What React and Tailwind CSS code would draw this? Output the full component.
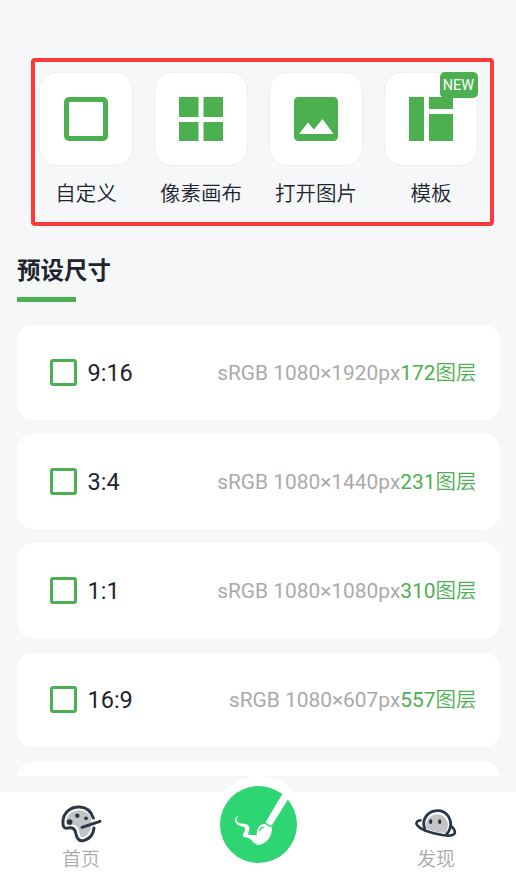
import React from 'react';
import clsx from 'clsx';

const FrameIcon = () => (
    <svg width="44" height="44" viewBox="0 0 44 44" fill="none">
        <rect x="2.5" y="2.5" width="39" height="39" rx="2.5" stroke="#4caf50" strokeWidth="5" />
    </svg>
);

const GridIcon = () => (
    <svg width="44" height="44" viewBox="0 0 44 44" fill="#4caf50">
        <path d="M0 0h19.5v20H0zM24.5 0H44v20H24.5zM0 25h19.5v19H0zM24.5 25H44v19H24.5z" />
    </svg>
);

const ImageIcon = () => (
    <svg width="44" height="44" viewBox="0 0 44 44">
        <rect width="44" height="44" rx="4.5" fill="#4caf50" />
        <path d="M5 37L14 25.5L20 32.5L28.5 22L39.5 37Z" fill="#fff" />
    </svg>
);

const TemplateIcon = () => (
    <svg width="44" height="44" viewBox="0 0 44 44" fill="#4caf50">
        <path d="M0 0h15v44H0zM20 0h24v12H20zM20 17h24v27H20z" />
    </svg>
);

const PaletteIcon = () => (
    <svg width="42" height="38" viewBox="61 45 126 114" fill="none" strokeLinecap="round" strokeLinejoin="round">
        <path d="M79 92C82 74 99 62 119 61C137 61 150 71 154 86L155 108C152 127 141 141 128 142C117 140 120 113 107 106C98 101 86 107 80 103Z" fill="#c4c4c4" />
        <path d="M161 84C154 62 140 52 120 51C91 50 70 70 70 94C69 111 74 116 84 114C100 110 107 118 109 132C113 151 122 155 134 151C151 146 161 132 163 114" stroke="#2c3549" strokeWidth="9" />
        <path d="M127 112L181 94" stroke="#2c3549" strokeWidth="9" />
        <circle cx="90" cy="96" r="8.5" fill="#2c3549" />
        <circle cx="113" cy="77" r="6.5" fill="#2c3549" />
        <circle cx="139" cy="85" r="5.5" fill="#2c3549" />
    </svg>
);

const PlanetIcon = () => (
    <svg width="44" height="34" viewBox="41 53 132 102" fill="none" strokeLinecap="round">
        <path d="M78 117C73 94 89 76 111 75C133 76 146 94 142 115L136 130C116 132 96 126 78 117Z" fill="#c4c4c4" />
        <path d="M73 118C63 91 82 65 109 64C139 62 157 91 149 117C147 124 143 130 139 134" stroke="#2c3549" strokeWidth="8.5" />
        <path d="M60 93C49 94 45 101 51 108C60 121 96 132 126 137C145 140 160 140 163 132C165 125 161 118 153 111" stroke="#2c3549" strokeWidth="8" />
        <ellipse cx="91" cy="97" rx="5" ry="7" fill="#2c3549" />
        <ellipse cx="118" cy="97" rx="5" ry="7" fill="#2c3549" />
    </svg>
);

const BrushLogo = () => (
    <svg width="77" height="77" viewBox="60.5 92.5 231 231">
        <circle cx="176" cy="208" r="115.5" fill="#2ed573" />
        <path d="M248 116L266 130L216 211C210 210 203 207 197 201Z" fill="#fff" />
        <path d="M195 206C202 212 209 215 216 217C218 241 203 268 171 270C165 255 170 244 171 232C173 215 182 207 195 206Z" fill="#fff" />
        <path d="M177 230C177 220 184 214 195 216C186 219 183 224 177 230Z" fill="#2ed573" />
        <path d="M117 181C107 185 103 193 107 201C111 210 121 211 130 215C140 219 135 225 130 237C128 242 129 246 136 246C146 247 154 251 161 262C166 268 170 267 170 257L169 241C163 239 156 240 149 239C142 239 145 235 148 227C151 215 147 208 133 206C119 205 111 201 110 195C109 190 113 185 117 181Z" fill="#fff" />
    </svg>
);

const actions = [
    { label: '自定义', icon: FrameIcon },
    { label: '像素画布', icon: GridIcon },
    { label: '打开图片', icon: ImageIcon },
    { label: '模板', icon: TemplateIcon, isNew: true },
];

const presets = [
    { ratio: '9:16', size: '1080×1920px', layers: 172 },
    { ratio: '3:4', size: '1080×1440px', layers: 231 },
    { ratio: '1:1', size: '1080×1080px', layers: 310 },
    { ratio: '16:9', size: '1080×607px', layers: 557 },
];

const ActionTile = ({ label, icon: Icon, isNew }) => (
    <div className="flex w-[115px] flex-col items-center">
        <div className="relative flex h-[94px] w-[94px] items-center justify-center rounded-[18px] border border-[#eeeff0] bg-white">
            <Icon />
            {isNew && (
                <span className="absolute -top-px -right-px flex h-[26px] w-[38px] items-center justify-center rounded-[5px] bg-[#4caf50] pt-[2px] text-[14.5px] text-white">
                    NEW
                </span>
            )}
        </div>
        <span className="mt-[13px] pl-px text-[20.5px] leading-[30px] font-[350] whitespace-nowrap">{label}</span>
    </div>
);

const PresetCard = ({ ratio, size, layers }) => (
    <div className="flex h-[94.7px] shrink-0 items-center rounded-[16px] bg-white pr-[23.5px] pl-[33px]">
        <span className="h-[27px] w-[27px] rounded-[3px] border-3 border-[#4caf50]" />
        <span className="ml-[10.5px] pt-[2px] text-[23.5px]">{ratio}</span>
        <span className="ml-auto pt-[2px] text-[20.9px] whitespace-nowrap text-[#aaaaaa]">
            sRGB {size}
            <span className="text-[#4caf50]">{layers}<span className="text-[20.5px] font-[350]">图层</span></span>
        </span>
    </div>
);

const NavItem = ({ label, icon, className }) => (
    <div className={clsx('flex w-[80px] flex-col items-center', className)}>
        <div className="flex h-[38px] items-center">{icon}</div>
        <span className="mt-1 text-[19px] leading-[26px] font-[350] text-[#aaaaaa]">{label}</span>
    </div>
);

export default function App() {
    return (
        <div className="flex h-[891px] w-[516px] flex-col overflow-hidden bg-[#f6f7f9] font-['Roboto','Noto_Sans_CJK_SC',sans-serif] text-[#20242e]">
            <section className="mt-[58px] ml-[31px] flex h-[168px] w-[463px] shrink-0 rounded-[4px] border-4 border-[#fb3a3b] pt-[10px]">
                <div className="-ml-[7px] flex shrink-0">
                    {actions.map(action => <ActionTile key={action.label} {...action} />)}
                </div>
            </section>

            <h2 className="mt-[28px] ml-[17px] text-[23.5px] leading-[34px] font-bold">预设尺寸</h2>
            <div className="mt-[9px] ml-[17px] h-[5px] w-[59px] shrink-0 bg-[#4caf50]" />

            <div className="mx-4 mt-[23px] flex h-[451px] shrink-0 flex-col gap-[14.5px] overflow-hidden pl-px">
                {presets.map(preset => <PresetCard key={preset.ratio} {...preset} />)}
                <div className="h-[95px] shrink-0 rounded-[16px] bg-white" />
            </div>

            <nav className="mt-4 flex h-[99px] shrink-0 justify-between bg-white pr-10 pl-[41px]">
                <NavItem label="首页" icon={<PaletteIcon />} className="pt-[13px]" />
                <div className="-mt-4 flex h-[96px] w-[96px] items-center justify-center rounded-full bg-white">
                    <BrushLogo />
                </div>
                <NavItem label="发现" icon={<PlanetIcon />} className="pt-[13px]" />
            </nav>
        </div>
    );
}
